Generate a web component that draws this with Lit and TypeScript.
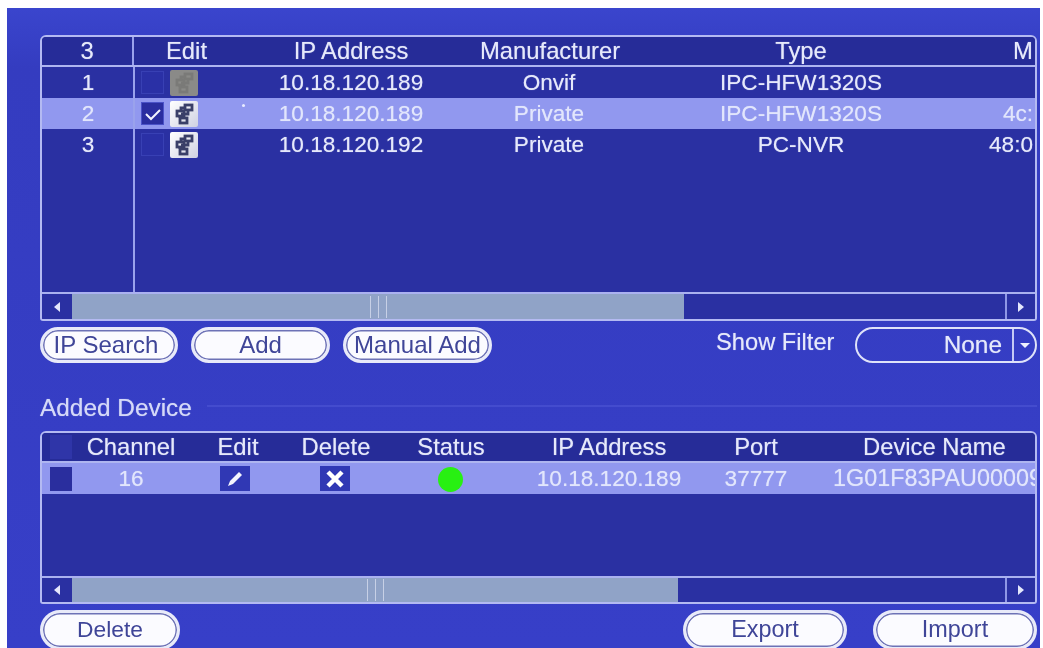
import { LitElement, html, css, svg } from "lit";
import { customElement } from "lit/decorators.js";

const linkIcon = svg`<svg class="glyph" viewBox="0 0 26 26"><g fill="none" stroke="currentColor" stroke-width="2.8"><rect x="14" y="4" width="7" height="5"/><rect x="6" y="10" width="7" height="5"/><rect x="9" y="17" width="7" height="5"/><path d="M14 7h-4v3M17 9v4h-7M9 15v2"/></g></svg>`;

@customElement("app-root")
export class AppRoot extends LitElement {
  static styles = css`
    :host { display: block; width: 1043px; height: 648px; overflow: hidden; background: #fff; font-family: "Liberation Sans", Arial, sans-serif; }
    * { box-sizing: border-box; }
    .panel { margin: 8px 3px 0 7px; height: 640px; padding: 27px 3px 0 33px; overflow: hidden; color: #e6e9fb; font-size: 22.6px; filter: blur(0.7px); text-shadow: 0 0 1px rgba(235,238,255,.6);
      background: linear-gradient(#3a45cd 0, #343cc0 60px, #373fc8 100%); display: flex; flex-direction: column; }
    .table { border: 2px solid #b4baf2; border-radius: 6px 6px 3px 3px; background: #2a30a2; overflow: hidden; display: flex; flex-direction: column; flex: none; }
    .t1 { height: 286px; }
    .t2 { height: 173px; }
    .body { flex: 1; min-height: 0; position: relative; }
    .row { display: grid; align-items: center; height: 31px; white-space: nowrap; overflow: hidden; }
    .t1 .row { grid-template-columns: 92px 88px 258px 138px 366px 1fr; }
    .t2 .row { grid-template-columns: 31px 116px 98px 98px 132px 184px 110px 1fr; }
    .row > span { text-align: center; }
    .head { height: 30px; background: #262c98; border-bottom: 2px solid #aeb5f0; font-size: 23.8px; }
    .sel { background: #9198ef; color: #e2e6fc; }
    .t1 .row > :first-child { height: 100%; display: flex; align-items: center; justify-content: center; }
    .t1 .head > :first-child { border-right: 2px solid #9aa2ec; }
    .edith { padding-left: 17px; }
    .divider { position: absolute; left: 91px; top: 0; bottom: 0; width: 2px; background: #9aa2ec; }
    .edit { display: flex; align-items: center; gap: 6px; padding-left: 7px; }
    .check { width: 23px; height: 23px; border: 1.5px solid #3840b4; background: #2a30a6; display: flex; align-items: center; justify-content: center; }
    .check.on { background: #2a2ea0; border-color: #4a52c8; }
    .tool { width: 28px; height: 26px; color: #3a3f68; background: linear-gradient(135deg, #fff, #cfd1e2); border-radius: 2px; display: flex; justify-content: center; }
    .tool.dim { background: #8a8a88; color: #7a7a78; }
    .glyph { width: 26px; height: 26px; display: block; }
    .left { text-align: left !important; overflow: hidden; }
    .m0 { padding-left: 29px; }
    .m1 { padding-left: 19px; }
    .m2 { padding-left: 5px; }
    .spot { position: absolute; left: 200px; top: 37px; width: 3px; height: 3px; border-radius: 50%; background: #e8ebff; }
    .bar { height: 27px; border-top: 2px solid #aab1f0; display: flex; background: #2a30a2; flex: none; }
    .t2 .bar { height: 26px; }
    .arrow { width: 30px; display: flex; align-items: center; justify-content: center; flex: none; }
    .arrow.r { border-left: 2px solid #8f97e6; width: 30px; }
    .tri { width: 0; height: 0; border-top: 5px solid transparent; border-bottom: 5px solid transparent; }
    .tri.l { border-right: 6px solid #e4e7fb; }
    .tri.rr { border-left: 6px solid #e4e7fb; }
    .thumb { background: #90a3c7; display: flex; align-items: center; justify-content: center; gap: 7px; flex: none; }
    .thumb i { width: 1px; height: 22px; background: #c7d0e6; display: block; }
    .thumb.a { width: 612px; }
    .thumb.b { width: 606px; }
    .fill { flex: 1; }
    .btns { display: flex; align-items: center; height: 36px; margin-top: 6px; flex: none; }
    .btn { height: 36px; border-radius: 18px; border: 3px solid #e8eaf9; box-shadow: inset 0 0 0 1.5px #6d72b6; background: #fbfbff; color: #3f4598; display: flex; align-items: center; justify-content: center; flex: none; font-size: 24px; text-shadow: none; white-space: nowrap; }
    .ip { width: 138px; margin-right: 13px; padding-right: 6px; }
    .add { width: 139px; margin-right: 13px; }
    .man { width: 149px; }
    .fl { margin-left: 224px; width: 139px; padding-bottom: 5px; white-space: nowrap; font-size: 23.7px; }
    .select { width: 183px; height: 36px; border: 2.5px solid #dfe2f9; border-radius: 18px; display: flex; align-items: center; font-size: 24.4px; }
    .select .v { flex: 1; text-align: right; padding-right: 10px; }
    .select .dd { width: 23px; height: 100%; border-left: 2px solid #c5caf5; display: flex; align-items: center; justify-content: center; }
    .down { width: 0; height: 0; border-left: 5px solid transparent; border-right: 5px solid transparent; border-top: 5px solid #eef0fd; }
    .title { display: flex; align-items: center; height: 30px; margin-top: 30px; margin-bottom: 8px; font-size: 24.4px; color: #d5d9f8; flex: none; }
    .title .line { flex: 1; height: 2px; margin-left: 15px; background: #444cce; margin-bottom: 4px; }
    .cb { width: 22px; height: 24px; background: #2a2e9e; margin-left: 8px; display: block; }
    .head .cb { background: #2f35a8; }
    .ico { width: 30px; height: 25px; background: #3038b4; margin: 0 auto; display: flex; align-items: center; justify-content: center; position: relative; left: -3px; }
    .ico.x { left: -1px; }
    .dot { width: 25px; height: 25px; border-radius: 50%; background: #28f012; margin: 2px auto 0; display: block; position: relative; left: -1px; }
    .name { padding-left: 22px; }
    .namehead { padding-left: 52px; }
    .bottom { display: flex; margin-top: 6px; flex: none; height: 38px; }
    .bottom .btn { height: 40px; border-radius: 20px; font-size: 23.4px; padding-bottom: 2px; }
    .bottom .del { font-size: 22.8px; }
    .del { width: 140px; margin-right: 503px; }
    .exp { width: 164px; margin-right: 26px; }
    .imp { width: 164px; }
    .devname { font-size: 23.4px; }
  `;

  render() {
    return html`
      <div class="panel">
        <div class="table t1">
          <div class="row head"><span>3</span><span class="edith">Edit</span><span>IP Address</span><span>Manufacturer</span><span>Type</span><span class="left m0">M</span></div>
          <div class="body">
            <div class="divider"></div>
            ${this.row1("1", false, true, "10.18.120.189", "Onvif", "IPC-HFW1320S", "", "m2", false)}
            ${this.row1("2", true, false, "10.18.120.189", "Private", "IPC-HFW1320S", "4c:", "m1", true)}
            ${this.row1("3", false, false, "10.18.120.192", "Private", "PC-NVR", "48:0", "m2", false)}
            <div class="spot"></div>
          </div>
          <div class="bar">
            <div class="arrow"><div class="tri l"></div></div>
            <div class="thumb a"><i></i><i></i><i></i></div>
            <div class="fill"></div>
            <div class="arrow r"><div class="tri rr"></div></div>
          </div>
        </div>
        <div class="btns">
          <div class="btn ip">IP Search</div>
          <div class="btn add">Add</div>
          <div class="btn man">Manual Add</div>
          <div class="fl">Show Filter</div>
          <div class="select"><div class="v">None</div><div class="dd"><div class="down"></div></div></div>
        </div>
        <div class="title">Added Device<div class="line"></div></div>
        <div class="table t2">
          <div class="row head"><span class="cb"></span><span>Channel</span><span>Edit</span><span>Delete</span><span>Status</span><span>IP Address</span><span>Port</span><span class="left namehead">Device Name</span></div>
          <div class="body">
            <div class="row sel">
              <span class="cb"></span><span>16</span>
              <span class="ico"><svg width="22" height="22" viewBox="0 0 22 22"><path d="M15 4l3 3-9 9-5 2 2-5z" fill="#f4f5fd"/></svg></span>
              <span class="ico x"><svg width="22" height="22" viewBox="0 0 22 22"><path d="M4 4l14 14M18 4L4 18" stroke="#fff" stroke-width="4.5"/></svg></span>
              <span><span class="dot"></span></span>
              <span>10.18.120.189</span><span>37777</span><span class="left name devname">1G01F83PAU00009</span>
            </div>
          </div>
          <div class="bar">
            <div class="arrow"><div class="tri l"></div></div>
            <div class="thumb b"><i></i><i></i><i></i></div>
            <div class="fill"></div>
            <div class="arrow r"><div class="tri rr"></div></div>
          </div>
        </div>
        <div class="bottom">
          <div class="btn del">Delete</div>
          <div class="btn exp">Export</div>
          <div class="btn imp">Import</div>
        </div>
      </div>
    `;
  }

  row1(n: string, on: boolean, dim: boolean, ip: string, mf: string, type: string, mac: string, mc: string, sel: boolean) {
    return html`<div class="row ${sel ? "sel" : ""}">
      <span>${n}</span>
      <div class="edit">
        <div class="check ${on ? "on" : ""}">${on ? html`<svg width="20" height="20" viewBox="0 0 20 20"><path d="M3 10l5 5 9-9" fill="none" stroke="#f2f4ff" stroke-width="2"/></svg>` : ""}</div>
        <div class="tool ${dim ? "dim" : ""}">${linkIcon}</div>
      </div>
      <span>${ip}</span><span>${mf}</span><span>${type}</span><span class="left ${mc}">${mac}</span>
    </div>`;
  }
}
